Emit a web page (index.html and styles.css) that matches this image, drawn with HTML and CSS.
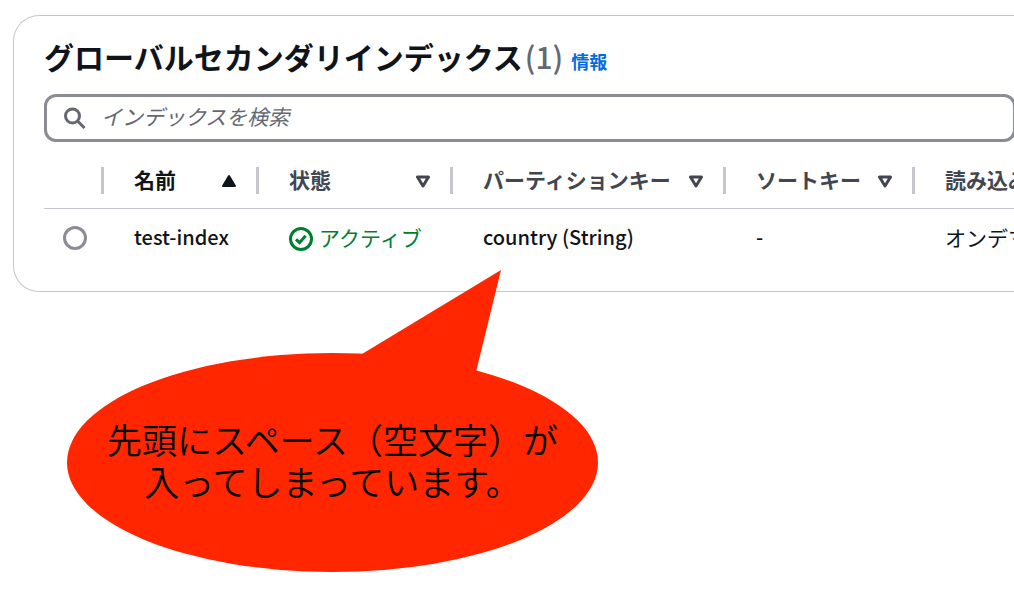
FILE: index.html
```html
<!DOCTYPE html>
<html lang="ja">
<head>
<meta charset="utf-8">
<title>グローバルセカンダリインデックス</title>
<link rel="stylesheet" href="styles.css">
</head>
<body>
<main class="panel">
  <header class="panel-header">
    <h1 class="title">グローバルセカンダリインデックス<span class="count">(1)</span></h1>
    <a class="info" href="#">情報</a>
  </header>
  <div class="search">
    <svg class="search-icon" viewBox="0 0 24 24" aria-hidden="true"><circle cx="9.5" cy="10" r="7"/><path d="M14.5 15 21.5 22"/></svg>
    <input class="search-input" type="search" aria-label="インデックスを検索" placeholder="インデックスを検索">
  </div>
  <table class="table">
    <colgroup><col class="col-select"><col class="col-name"><col class="col-status"><col class="col-partition"><col class="col-sort"><col></colgroup>
    <thead>
      <tr>
        <th><div class="head"></div></th>
        <th><button class="head sorted">名前<svg class="arrow" viewBox="0 0 16 14"><path class="solid" d="M8 2 14 12H2Z"/></svg></button></th>
        <th><button class="head">状態<svg class="arrow" viewBox="0 0 16 14"><path d="M2.5 3h11L8 12Z"/></svg></button></th>
        <th><button class="head">パーティションキー<svg class="arrow" viewBox="0 0 16 14"><path d="M2.5 3h11L8 12Z"/></svg></button></th>
        <th><button class="head">ソートキー<svg class="arrow" viewBox="0 0 16 14"><path d="M2.5 3h11L8 12Z"/></svg></button></th>
        <th><button class="head last">読み込み</button></th>
      </tr>
    </thead>
    <tbody>
      <tr>
        <td class="select"><input class="radio" type="radio" name="index" aria-label="test-index"></td>
        <td class="value">test-index</td>
        <td><span class="status"><svg class="status-icon" viewBox="0 0 24 24" aria-hidden="true"><circle cx="12" cy="12" r="10.5"/><path d="m7 12.3 3.6 3.4 6-7"/></svg>アクティブ</span></td>
        <td class="value">country (String)</td>
        <td class="value">-</td>
        <td>オンデマ</td>
      </tr>
    </tbody>
  </table>
</main>
<aside class="callout">
  <svg class="callout-shape" viewBox="0 0 531 302" aria-hidden="true"><ellipse cx="265.5" cy="192.5" rx="265.5" ry="109.5"/><path d="M295 84 434 0 409 102 350 140Z"/></svg>
  <p class="callout-text">先頭にスペース（空文字）が<br>入ってしまっています。</p>
</aside>
</body>
</html>
```
FILE: styles.css
```css
* { box-sizing: border-box; }

body {
  margin: 0;
  padding: 15px 0 0 13px;
  min-height: 100vh;
  position: relative;
  overflow: hidden;
  background: #fff;
  color: #0f141a;
  font-family: "Noto Sans CJK JP", "Noto Sans", sans-serif;
  font-size: 21px;
  line-height: 30px;
}

.panel {
  border: 1px solid #c6c6cd;
  border-right: 0;
  border-radius: 26px 0 0 26px;
  padding: 18px 0 24px 30px;
}

.panel-header {
  display: flex;
  align-items: baseline;
  gap: 8px;
  margin-bottom: 16px;
}

.title {
  display: flex;
  gap: 2px;
  margin: 0;
  font-size: 30px;
  line-height: 44px;
  font-weight: 700;
  white-space: nowrap;
}

.count { font-weight: 500; color: #656871; }

.info {
  color: #006ce0;
  font-size: 18px;
  font-weight: 700;
  text-decoration: none;
}

.search {
  display: flex;
  align-items: center;
  height: 48px;
  margin-right: -2px;
  padding: 0 16px;
  gap: 14px;
  border: 3px solid #8c8c94;
  border-radius: 12px;
}

.search-icon {
  width: 24px;
  height: 24px;
  flex: none;
  fill: none;
  stroke: #656871;
  stroke-width: 3;
}

.search-input {
  flex: 1;
  min-width: 0;
  padding: 0 0 4px;
  border: 0;
  outline: 0;
  background: none;
  font: inherit;
}

.search-input::placeholder {
  color: #656871;
  font-style: italic;
  opacity: 1;
}

.table {
  width: 100%;
  margin-top: 12px;
  table-layout: fixed;
  border-collapse: collapse;
  white-space: nowrap;
}

.col-select { width: 60px; }
.col-name { width: 155px; }
.col-status { width: 194px; }
.col-partition { width: 273px; }
.col-sort { width: 189px; }

th {
  height: 54px;
  padding: 0;
  border-bottom: 1px solid #c6c6cd;
  vertical-align: middle;
}

.head {
  display: flex;
  align-items: center;
  justify-content: space-between;
  width: 100%;
  height: 27px;
  padding: 0 19px 4px 30px;
  border: 0;
  border-right: 3px solid #c6c6cd;
  background: none;
  color: #424650;
  font: inherit;
  font-weight: 700;
}

.sorted { color: #0f141a; }
.last { border-right: 0; }

.arrow {
  width: 16px;
  height: 14px;
  margin-top: 4px;
  flex: none;
  fill: none;
  stroke: #424650;
  stroke-width: 3;
  stroke-linejoin: round;
}

.solid { fill: #0f141a; stroke: #0f141a; stroke-width: 2; }

td {
  height: 59px;
  padding: 0 0 2px 30px;
  vertical-align: middle;
}

.value { font-size: 20px; font-weight: 500; }

.select { padding: 0 0 0 19px; }

.radio {
  display: block;
  appearance: none;
  width: 24px;
  height: 24px;
  margin: 0;
  border: 3px solid #8c8c94;
  border-radius: 50%;
}

.status {
  display: flex;
  align-items: center;
  gap: 6px;
  color: #00802f;
}

.status-icon {
  width: 24px;
  height: 24px;
  margin-top: 4px;
  fill: none;
  stroke: #00802f;
  stroke-width: 3;
}

.callout {
  position: absolute;
  left: 67px;
  top: 270px;
  width: 531px;
  height: 302px;
  display: grid;
}

.callout-shape {
  grid-area: 1 / 1;
  width: 100%;
  height: 100%;
  fill: #ff2600;
}

.callout-text {
  grid-area: 1 / 1;
  z-index: 1;
  margin: 0;
  padding-top: 148px;
  color: #000;
  font-size: 35px;
  font-weight: 350;
  line-height: 42px;
  text-align: center;
}
```
